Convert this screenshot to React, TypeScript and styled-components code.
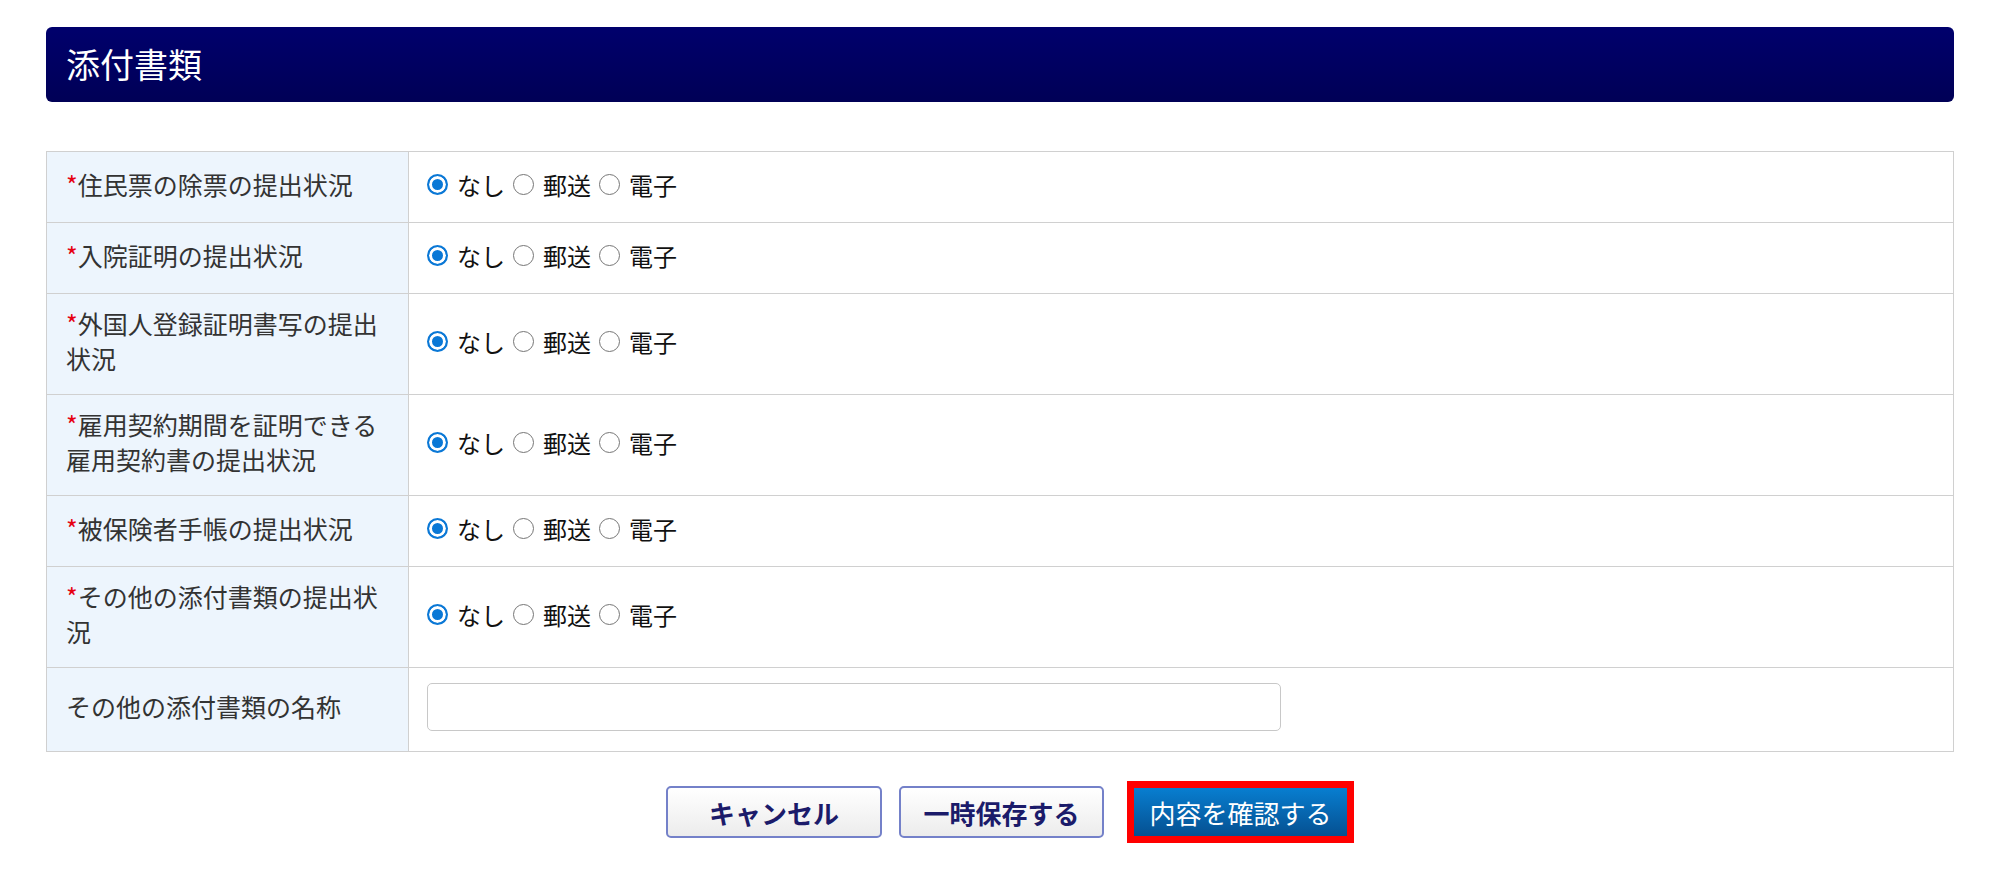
import styled, { createGlobalStyle } from "styled-components";

const GlobalStyle = createGlobalStyle`
  body {
    margin: 0;
    background: #fff;
    font-family: "Noto Sans CJK JP", "Noto Sans", sans-serif;
    color: #333;
  }
`;

const Page = styled.div`
  padding: 27px 46px 0 46px;
`;

const SectionHeader = styled.h2`
  margin: 0;
  height: 75px;
  display: flex;
  align-items: center;
  padding: 0 20px 3px;
  box-sizing: border-box;
  border-radius: 6px;
  background: linear-gradient(#00006c, #000056);
  color: #fff;
  font-size: 34px;
  font-weight: normal;
`;

const FormTable = styled.table`
  width: 100%;
  margin-top: 49px;
  border-collapse: collapse;
  border: 1px solid #d0d0d0;
`;

const LabelCell = styled.th`
  width: 316px;
  padding: 12px 26px 18px 19px;
  background: #edf5fd;
  border: 1px solid #d0d0d0;
  text-align: left;
  font-size: 25px;
  font-weight: normal;
  line-height: 35px;
  color: #333;
`;

const ValueCell = styled.td<{ $tall?: boolean }>`
  padding: ${(p) => (p.$tall ? "15px 18px 20px" : "12px 18px 18px")};
  border: 1px solid #d0d0d0;
  vertical-align: middle;
`;

const Required = styled.span`
  color: #e60012;
`;

const RadioGroup = styled.div`
  display: flex;
  align-items: center;
  height: 40px;
  font-size: 24px;
  color: #111;
`;

const RadioLabel = styled.label`
  display: flex;
  align-items: center;
  margin-right: 8px;
`;

const Radio = styled.input`
  appearance: none;
  width: 21px;
  height: 21px;
  margin: 0 9px 0 0;
  border-radius: 50%;
  border: 1.5px solid #767676;
  background: #fff;
  &:checked {
    border: 2px solid #0a78d6;
    background: #0a78d6;
    box-shadow: inset 0 0 0 3px #fff;
  }
`;

const TextInput = styled.input`
  display: block;
  width: 854px;
  height: 48px;
  box-sizing: border-box;
  border: 1px solid #c8c8c8;
  border-radius: 5px;
  font-size: 22px;
  padding: 0 10px;
`;

const ButtonRow = styled.div`
  display: flex;
  justify-content: center;
  align-items: center;
  margin-top: 29px;
  padding-left: 20px;
`;

const GhostButton = styled.button<{ $w: number }>`
  width: ${(p) => p.$w}px;
  height: 52px;
  margin-right: 17px;
  border: 2px solid #7481c9;
  border-radius: 5px;
  background: linear-gradient(#ffffff, #ececec);
  color: #1b1b6a;
  font-family: "Noto Sans CJK JP", sans-serif;
  font-size: 26px;
  font-weight: bold;
`;

const Focus = styled.div`
  margin-left: 6px;
  border: 7px solid #ff0000;
`;

const PrimaryButton = styled.button`
  display: block;
  width: 213px;
  height: 48px;
  border: none;
  background: linear-gradient(#087ed0, #055091);
  color: #fff;
  font-family: "Noto Sans CJK JP", sans-serif;
  font-size: 26px;
`;

const rows = [
  { label: "住民票の除票の提出状況" },
  { label: "入院証明の提出状況" },
  { label: "外国人登録証明書写の提出状況" },
  { label: "雇用契約期間を証明できる雇用契約書の提出状況" },
  { label: "被保険者手帳の提出状況" },
  { label: "その他の添付書類の提出状況" },
];

const options = ["なし", "郵送", "電子"];

export default function App() {
  return (
    <Page>
      <GlobalStyle />
      <SectionHeader>添付書類</SectionHeader>
      <FormTable>
        <tbody>
          {rows.map((row, i) => (
            <tr key={i}>
              <LabelCell>
                <Required>*</Required>
                {row.label}
              </LabelCell>
              <ValueCell>
                <RadioGroup>
                  {options.map((opt, j) => (
                    <RadioLabel key={opt}>
                      <Radio type="radio" name={`doc${i}`} defaultChecked={j === 0} />
                      {opt}
                    </RadioLabel>
                  ))}
                </RadioGroup>
              </ValueCell>
            </tr>
          ))}
          <tr>
            <LabelCell>その他の添付書類の名称</LabelCell>
            <ValueCell $tall>
              <TextInput type="text" />
            </ValueCell>
          </tr>
        </tbody>
      </FormTable>
      <ButtonRow>
        <GhostButton $w={216}>キャンセル</GhostButton>
        <GhostButton $w={205}>一時保存する</GhostButton>
        <Focus>
          <PrimaryButton>内容を確認する</PrimaryButton>
        </Focus>
      </ButtonRow>
    </Page>
  );
}
